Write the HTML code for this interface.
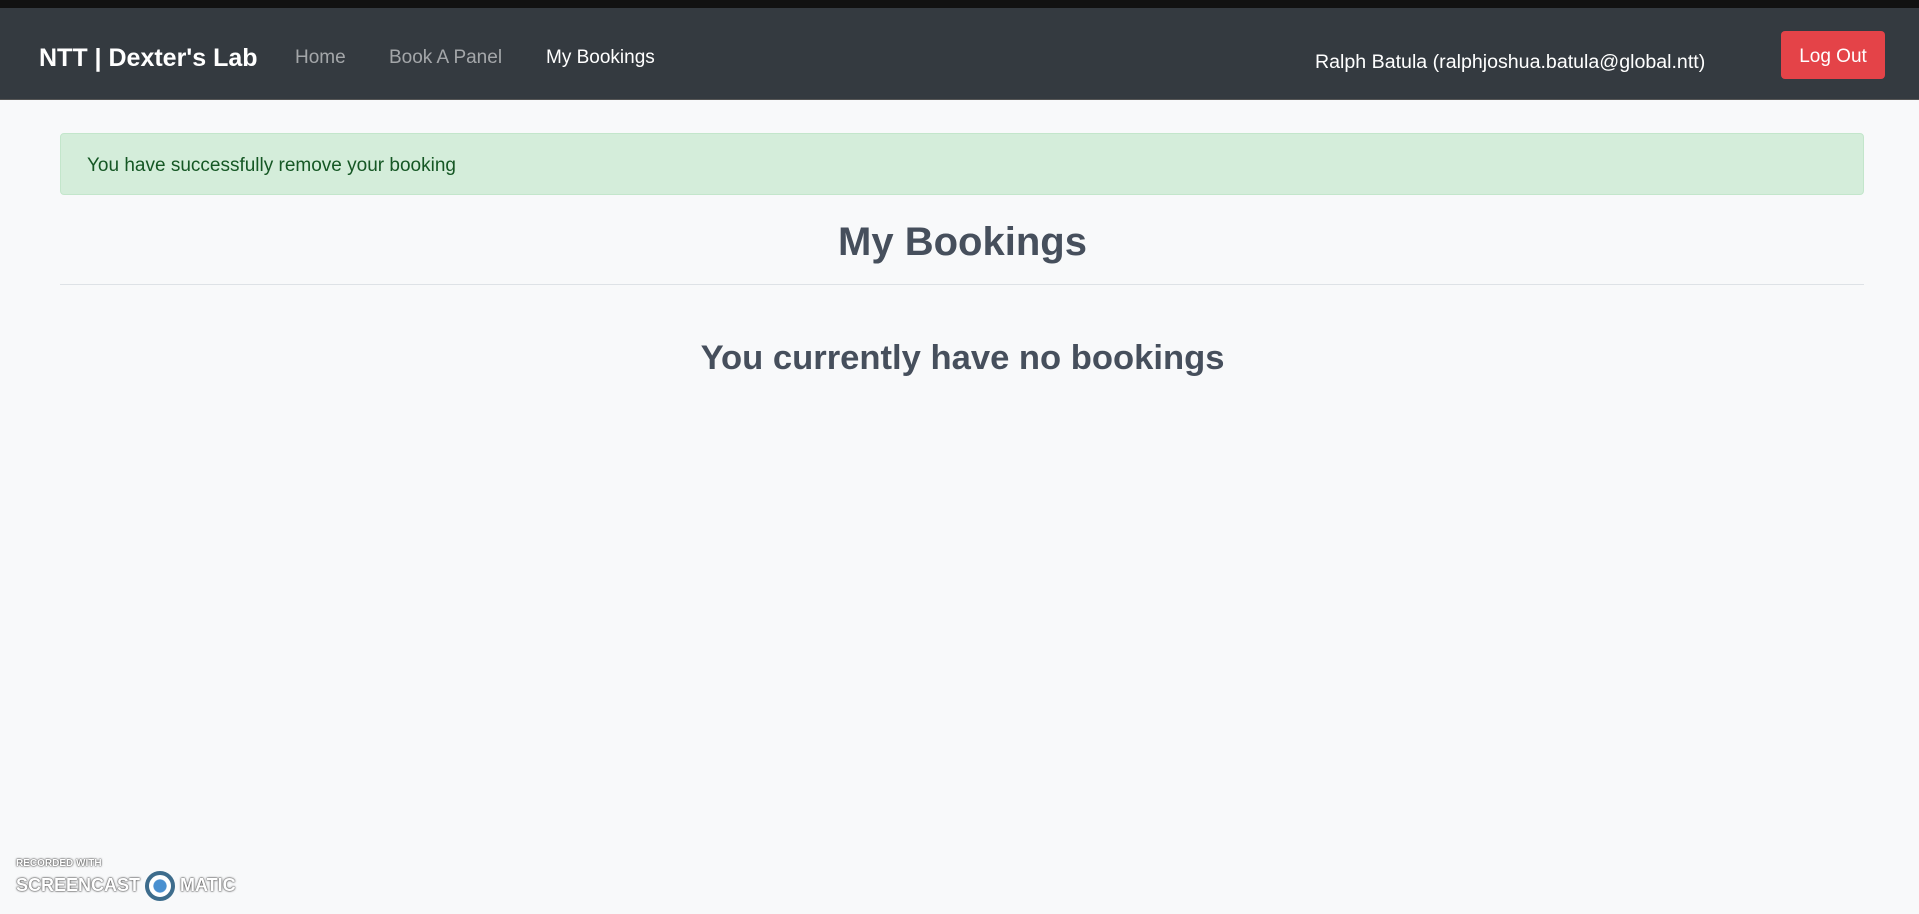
<!DOCTYPE html>
<html><head><meta charset="utf-8"><style>
*{margin:0;padding:0;box-sizing:border-box}
body{width:1919px;height:914px;background:#f8f9fa;font-family:"Liberation Sans","DejaVu Sans",sans-serif;position:relative;overflow:hidden}
.top{position:absolute;left:0;top:0;width:1919px;height:8px;background:#111}
.nav{position:absolute;left:0;top:8px;width:1919px;height:92px;background:#343a40;border-bottom:1px solid #555}
.nav span{position:absolute;white-space:nowrap}
.brand{left:39px;top:36px;font-size:25px;font-weight:bold;color:#fff;letter-spacing:0px}
.lnk{top:39px;font-size:19px;color:rgba(255,255,255,.55)}
.user{left:1315px;top:43px;font-size:19.6px;color:#fff}
.btn{position:absolute;left:1781px;top:31px;width:104px;height:48px;background:#e44348;border-radius:4px;color:#fff;font-size:19px;text-align:center;line-height:52px}
.alert{position:absolute;left:60px;top:133px;width:1804px;height:62px;background:#d4edda;border:1px solid #c3e6cb;border-radius:4px;color:#155724;font-size:19px;padding-left:26px;line-height:64px}
h1{position:absolute;left:0;width:1925px;top:220px;text-align:center;font-size:40px;color:#464f5c}
hr{position:absolute;left:60px;top:284px;width:1804px;border:0;border-top:1px solid #dee2e6}
h2{position:absolute;left:0;width:1925px;top:339px;text-align:center;font-size:34.6px;color:#464f5c}
.wm{position:absolute;left:16px;top:858px;color:#fff;font-weight:bold;text-shadow:0 0 2px #333,0 0 1px #333}
</style></head><body>
<div class="top"></div>
<div class="nav">
<span class="brand">NTT | Dexter's Lab</span>
<span class="lnk" style="left:295px">Home</span>
<span class="lnk" style="left:389px">Book A Panel</span>
<span class="lnk" style="left:546px;color:#fff">My Bookings</span>
<span class="user">Ralph Batula (ralphjoshua.batula@global.ntt)</span>
</div>
<div class="btn">Log Out</div>
<div class="alert">You have successfully remove your booking</div>
<h1>My Bookings</h1>
<hr>
<h2>You currently have no bookings</h2>
<div class="wm"><div style="font-size:10px">RECORDED WITH</div>
<div style="font-size:18px;margin-top:2px">SCREENCAST <span style="display:inline-block;width:30px;height:30px;border-radius:50%;border:4px solid #3d6c8c;vertical-align:middle;background:radial-gradient(#4a90d0 40%,#fff 45%)"></span> MATIC</div></div>
</body></html>
